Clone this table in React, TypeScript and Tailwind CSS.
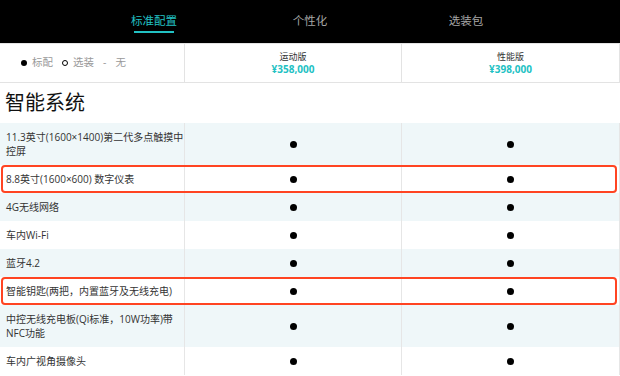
import React from "react";

const tabs = [
  { title: "标准配置", active: true },
  { title: "个性化" },
  { title: "选装包" },
];

const trims = [
  { name: "运动版", price: "¥358,000" },
  { name: "性能版", price: "¥398,000" },
];

const features = [
  { label: "11.3英寸(1600×1400)第二代多点触摸中控屏" },
  { label: "8.8英寸(1600×600) 数字仪表", marked: true },
  { label: "4G无线网络" },
  { label: "车内Wi-Fi" },
  { label: "蓝牙4.2" },
  { label: "智能钥匙(两把，内置蓝牙及无线充电)", marked: true },
  { label: "中控无线充电板(Qi标准，10W功率)带NFC功能" },
  { label: "车内广视角摄像头" },
];

function Dot() {
  return <span className="block w-[7px] h-[7px] rounded-full bg-black" />;
}

export default function App() {
  return (
    <div
      className="w-[620px] h-[376px] overflow-hidden bg-white text-[#333]"
      style={{ fontFamily: '"Open Sans", "Noto Sans CJK SC", sans-serif' }}
    >
      {/* Tabs */}
      <nav className="h-[43px] bg-black flex justify-center">
        {tabs.map((tab) => (
          <div key={tab.title} className="w-[156px] flex flex-col items-center pt-[13px]">
            <span
              className={
                tab.active
                  ? "text-[11.5px] leading-[16px] text-[#22c1c3]"
                  : "text-[11.5px] leading-[16px] text-[#a6a6a6]"
              }
            >
              {tab.title}
            </span>
            {tab.active && <span className="mt-[2px] h-[2px] w-[40px] bg-[#22c1c3]" />}
          </div>
        ))}
      </nav>

      {/* Header */}
      <div className="grid grid-cols-[185px_217px_218px] h-[40px] border-t border-b border-[#e3e3e3]">
        <div className="border-r border-[#e3e3e3] flex items-center pl-[21px] gap-[9px] text-[10.5px] text-[#999]">
          <span className="flex items-center gap-[5px]">
            <span className="block w-[6px] h-[6px] rounded-full bg-black" />
            标配
          </span>
          <span className="flex items-center gap-[5px]">
            <span className="block w-[6px] h-[6px] rounded-full border border-black" />
            选装
          </span>
          <span>-</span>
          <span>无</span>
        </div>
        {trims.map((trim) => (
          <div
            key={trim.name}
            className="border-r border-[#e3e3e3] flex flex-col items-center justify-center"
          >
            <span className="text-[9px] leading-[12px] text-[#333]">{trim.name}</span>
            <span className="text-[10px] leading-[13px] font-bold text-[#22c1c3]">{trim.price}</span>
          </div>
        ))}
      </div>

      {/* Section title */}
      <h2 className="h-[40px] flex items-center pl-[5px] text-[20px] text-[#111]">智能系统</h2>

      {/* Rows */}
      <div>
        {features.map((f, i) => (
          <div
            key={f.label}
            className={
              "relative grid grid-cols-[185px_217px_218px] " +
              (i % 2 === 0 ? "bg-[#eff7f9]" : "bg-white")
            }
          >
            <div className="border-r border-[#e6e6e6] pl-[6px] py-[7px] text-[10px] leading-[14px] min-h-[28px]">
              {f.label}
            </div>
            <div className="border-r border-[#e6e6e6] flex items-center justify-center">
              <Dot />
            </div>
            <div className="border-r border-[#e6e6e6] flex items-center justify-center">
              <Dot />
            </div>
            {f.marked && (
              <div className="absolute left-[1px] right-[3px] top-0 bottom-0 border-2 border-[#ff4422] rounded-[4px]" />
            )}
          </div>
        ))}
      </div>
    </div>
  );
}
